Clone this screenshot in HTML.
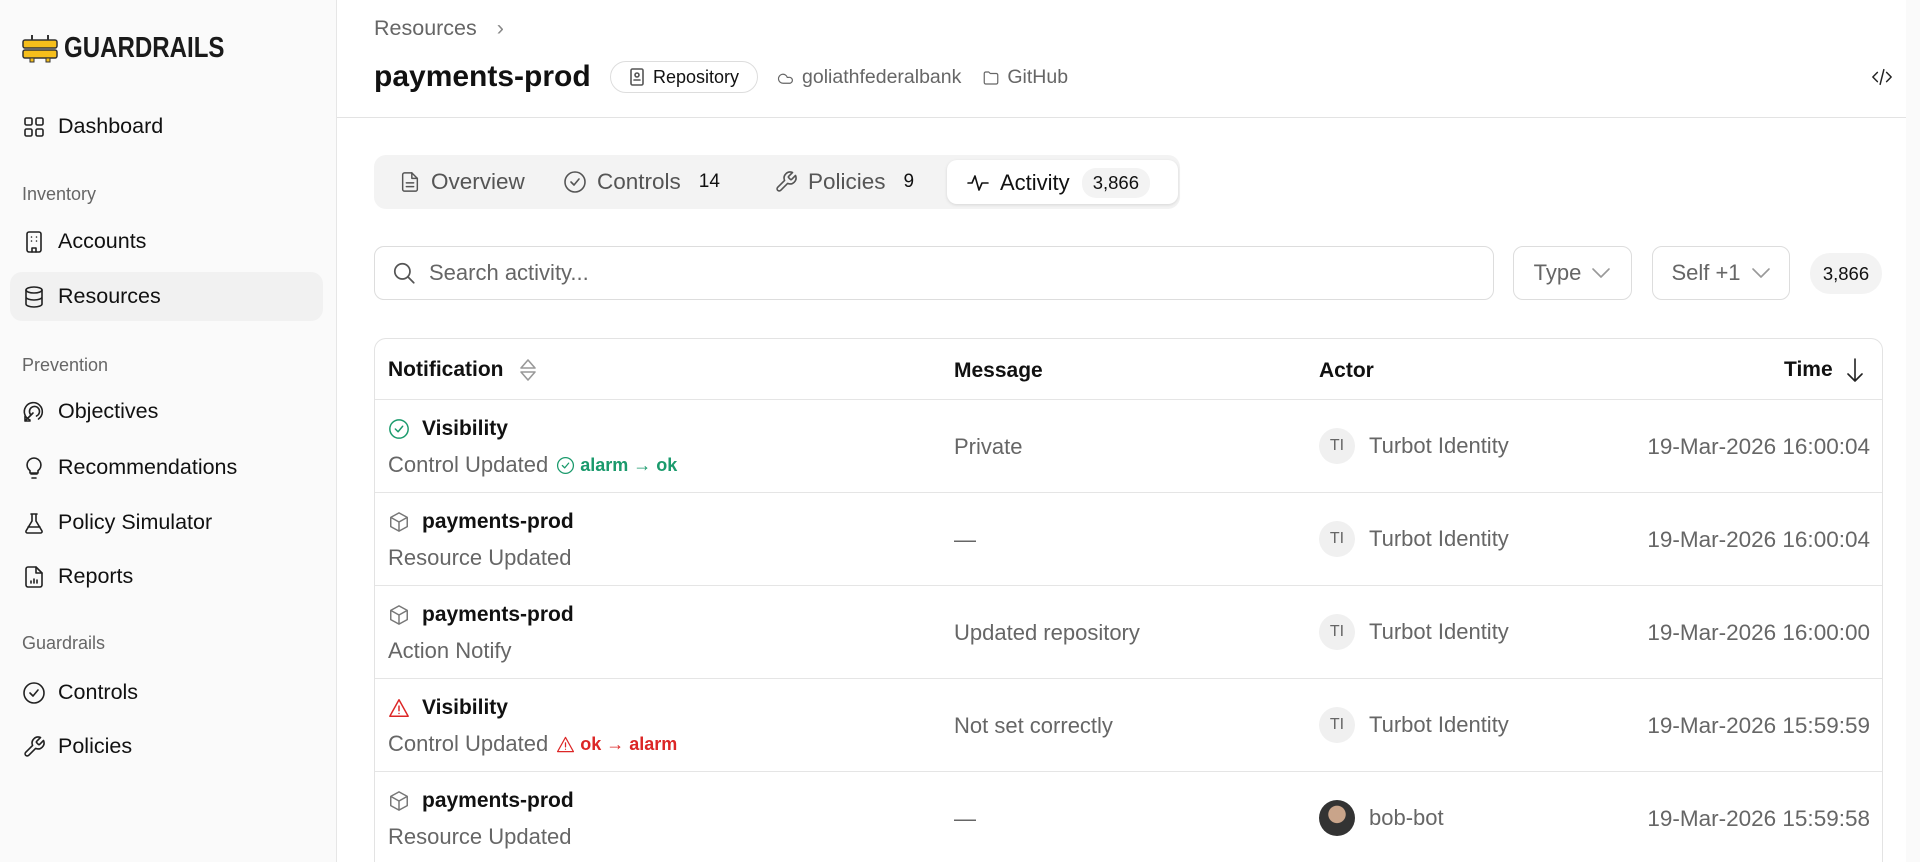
<!DOCTYPE html>
<html><head><meta charset="utf-8"><style>
*{box-sizing:border-box;margin:0;padding:0}
html,body{width:1920px;height:862px;overflow:hidden}
body{background:#fff;font-family:"Liberation Sans",sans-serif;color:#111;position:relative}
#wrap{position:absolute;left:0;top:0;width:1920px;height:862px;overflow:hidden}
.a{position:absolute;white-space:nowrap}
#sb{position:absolute;left:0;top:0;width:337px;height:862px;background:#fafafa;border-right:1px solid #e6e6e6}
.nav{position:absolute;left:22px;font-size:21.5px;color:#111;display:flex;align-items:center;gap:12px}
.nav svg{width:24px;height:24px;fill:none;stroke:#222;stroke-width:1.6;stroke-linecap:round;stroke-linejoin:round}
.sec{position:absolute;left:22px;font-size:18px;color:#666}
.ic{fill:none;stroke:currentColor;stroke-width:1.6;stroke-linecap:round;stroke-linejoin:round}
.row{position:absolute;left:375px;width:1507px;height:93px;border-top:1px solid #e5e5e5}
.t1{position:absolute;left:13px;top:17px;font-size:21px;font-weight:bold;color:#111;display:flex;align-items:center;gap:12px}
.t2{position:absolute;left:13px;top:52px;font-size:22px;color:#666;display:flex;align-items:center;gap:8px}
.msg{position:absolute;left:579px;top:34px;font-size:22px;color:#666}
.act{position:absolute;left:944px;top:28px;font-size:22px;color:#666;display:flex;align-items:center;gap:14px}
.av{width:36px;height:36px;border-radius:50%;background:#f0f0f0;font-size:16px;color:#666;display:flex;align-items:center;justify-content:center}
.tm{position:absolute;right:12px;top:34px;font-size:22.5px;color:#666}
</style></head><body><div id="wrap">
<div id="sb">
  <div class="a" style="left:22px;top:32px;display:flex;align-items:center;gap:6px">
    <svg width="36" height="30" viewBox="0 0 36 30"><rect x="9" y="1" width="2" height="6" fill="#333"/><rect x="25" y="1" width="2" height="6" fill="#333"/><rect x="1" y="6" width="34" height="8" rx="2" fill="#f5be1b" stroke="#333" stroke-width="1.5"/><rect x="1" y="16" width="34" height="8" rx="2" fill="#f5be1b" stroke="#333" stroke-width="1.5"/><rect x="8" y="24" width="4" height="4" fill="#f5be1b" stroke="#333"/><rect x="24" y="24" width="4" height="4" fill="#f5be1b" stroke="#333"/></svg>
    <span style="font-size:29px;font-weight:bold;color:#1a1a1a;display:inline-block;transform:scaleX(0.83);transform-origin:left center">GUARDRAILS</span>
  </div>
  <div class="nav" style="top:114px"><svg viewBox="0 0 24 24"><rect x="3" y="3" width="7" height="7" rx="1.5"/><rect x="14" y="3" width="7" height="7" rx="1.5"/><rect x="3" y="14" width="7" height="7" rx="1.5"/><rect x="14" y="14" width="7" height="7" rx="1.5"/></svg>Dashboard</div>
  <div class="sec" style="top:184px">Inventory</div>
  <div class="nav" style="top:229px"><svg viewBox="0 0 24 24"><rect x="5" y="2" width="14" height="20" rx="2"/><path d="M10 22v-4h4v4M9.5 7h.01M14.5 7h.01M9.5 11h.01M14.5 11h.01"/></svg>Accounts</div>
  <div class="a" style="left:10px;top:272px;width:313px;height:49px;border-radius:12px;background:#f1f1f1"></div>
  <div class="nav" style="top:284px"><svg viewBox="0 0 24 24"><ellipse cx="12" cy="5" rx="8" ry="3"/><path d="M4 5v14c0 1.7 3.6 3 8 3s8-1.3 8-3V5M4 12c0 1.7 3.6 3 8 3s8-1.3 8-3"/></svg>Resources</div>
  <div class="sec" style="top:355px">Prevention</div>
  <div class="nav" style="top:399px"><svg viewBox="0 0 24 24"><path d="M8 20a9 9 0 1 1 8.5-1M9 15a5 5 0 1 1 5.5 1M3 21l8-8M3 16v5h5"/></svg>Objectives</div>
  <div class="nav" style="top:455px"><svg viewBox="0 0 24 24"><path d="M9 18h6M10 22h4M12 2a7 7 0 0 0-4 12.7V17h8v-2.3A7 7 0 0 0 12 2z"/></svg>Recommendations</div>
  <div class="nav" style="top:510px"><svg viewBox="0 0 24 24"><path d="M9 3h6M10 3v7L4 20a1.5 1.5 0 0 0 1.3 2h13.4a1.5 1.5 0 0 0 1.3-2L14 10V3M6 16h12"/></svg>Policy Simulator</div>
  <div class="nav" style="top:564px"><svg viewBox="0 0 24 24"><path d="M14 2H6a2 2 0 0 0-2 2v16a2 2 0 0 0 2 2h12a2 2 0 0 0 2-2V8z"/><path d="M14 2v6h6M9 18v-2M12 18v-4M15 18v-3"/></svg>Reports</div>
  <div class="sec" style="top:633px">Guardrails</div>
  <div class="nav" style="top:680px"><svg viewBox="0 0 24 24"><circle cx="12" cy="12" r="10"/><path d="M8 12l3 3 5-6"/></svg>Controls</div>
  <div class="nav" style="top:734px"><svg viewBox="0 0 24 24"><path d="M14.7 6.3a1 1 0 0 0 0 1.4l1.6 1.6a1 1 0 0 0 1.4 0l3.8-3.8a6 6 0 0 1-7.9 7.9l-6.9 6.9a2.1 2.1 0 0 1-3-3l6.9-6.9a6 6 0 0 1 7.9-7.9z"/></svg>Policies</div>
</div>

<div class="a" style="left:374px;top:16px;font-size:21.5px;color:#666">Resources <span style="margin-left:14px;color:#888">›</span></div>
<div class="a" style="left:374px;top:60px;font-size:30px;font-weight:bold;color:#111">payments-prod</div>
<div class="a" style="left:610px;top:61px;width:148px;height:32px;border:1px solid #ddd;border-radius:16px;display:flex;align-items:center;justify-content:center;gap:8px;font-size:18px;color:#111"><svg width="16" height="18" viewBox="0 0 16 18" class="ic" style="color:#555"><rect x="2" y="1" width="12" height="16" rx="1.5"/><circle cx="8" cy="7" r="2"/><path d="M5 12h6"/></svg>Repository</div>
<div class="a" style="left:776px;top:66px;font-size:19.5px;color:#666;display:flex;align-items:center;gap:6px"><svg width="20" height="18" viewBox="0 0 24 24" class="ic"><path d="M17.5 19H8a6 6 0 1 1 5.7-7.8h1.8a4 4 0 0 1 2 7.8z"/></svg>goliathfederalbank<svg width="20" height="18" viewBox="0 0 24 24" class="ic" style="margin-left:14px"><path d="M3 6a2 2 0 0 1 2-2h4l2 2h8a2 2 0 0 1 2 2v10a2 2 0 0 1-2 2H5a2 2 0 0 1-2-2z"/></svg>GitHub</div>
<svg class="a ic" style="left:1870px;top:66px;color:#222" width="24" height="22" viewBox="0 0 24 24"><path d="M7 7l-5 5 5 5M17 7l5 5-5 5M14 4l-4 16"/></svg>
<div class="a" style="left:337px;top:117px;width:1583px;height:1px;background:#e3e3e3"></div>

<div class="a" style="left:374px;top:155px;width:806px;height:54px;background:#f3f3f3;border-radius:12px"></div>
<div class="a" style="left:947px;top:160px;width:231px;height:44px;background:#fff;border-radius:10px;box-shadow:0 1px 3px rgba(0,0,0,.12)"></div>
<div class="a" style="left:399px;top:169px;font-size:22.5px;color:#555;display:flex;align-items:center;gap:10px"><svg width="22" height="24" viewBox="0 0 24 24" class="ic"><path d="M14 2H6a2 2 0 0 0-2 2v16a2 2 0 0 0 2 2h12a2 2 0 0 0 2-2V8z"/><path d="M14 2v6h6M8 13h8M8 17h8"/></svg>Overview</div>
<div class="a" style="left:563px;top:169px;font-size:22.5px;color:#555;display:flex;align-items:center;gap:10px"><svg width="24" height="24" viewBox="0 0 24 24" class="ic"><circle cx="12" cy="12" r="10"/><path d="M8 12l3 3 5-6"/></svg>Controls<span style="font-size:19px;color:#111;margin-left:8px">14</span></div>
<div class="a" style="left:774px;top:169px;font-size:22.5px;color:#555;display:flex;align-items:center;gap:10px"><svg width="24" height="24" viewBox="0 0 24 24" class="ic"><path d="M14.7 6.3a1 1 0 0 0 0 1.4l1.6 1.6a1 1 0 0 0 1.4 0l3.8-3.8a6 6 0 0 1-7.9 7.9l-6.9 6.9a2.1 2.1 0 0 1-3-3l6.9-6.9a6 6 0 0 1 7.9-7.9z"/></svg>Policies<span style="font-size:19px;color:#111;margin-left:8px">9</span></div>
<div class="a" style="left:966px;top:168px;font-size:22px;color:#111;display:flex;align-items:center;gap:10px"><svg width="24" height="24" viewBox="0 0 24 24" class="ic"><path d="M2 12h4l3-7 4 14 3-7h6"/></svg>Activity<span style="font-size:18.5px;background:#f3f3f3;border-radius:14px;padding:4px 11px;margin-left:2px">3,866</span></div>

<div class="a" style="left:374px;top:246px;width:1120px;height:54px;border:1px solid #ddd;border-radius:10px;display:flex;align-items:center;padding-left:16px;gap:12px;font-size:22px;color:#666"><svg width="26" height="26" viewBox="0 0 24 24" class="ic" style="color:#555"><circle cx="10.5" cy="10.5" r="7"/><path d="M21 21l-5.5-5.5"/></svg>Search activity...</div>
<div class="a" style="left:1513px;top:246px;width:119px;height:54px;border:1px solid #ddd;border-radius:10px;display:flex;align-items:center;justify-content:center;gap:10px;font-size:22px;color:#666">Type<svg width="20" height="12" viewBox="0 0 20 12" class="ic" style="color:#999"><path d="M2 2l8 8 8-8"/></svg></div>
<div class="a" style="left:1652px;top:246px;width:138px;height:54px;border:1px solid #ddd;border-radius:10px;display:flex;align-items:center;justify-content:center;gap:10px;font-size:22px;color:#666">Self +1<svg width="20" height="12" viewBox="0 0 20 12" class="ic" style="color:#999"><path d="M2 2l8 8 8-8"/></svg></div>
<div class="a" style="left:1810px;top:253px;width:72px;height:41px;border-radius:20px;background:#f3f3f3;font-size:18.5px;color:#111;display:flex;align-items:center;justify-content:center">3,866</div>

<div class="a" style="left:374px;top:338px;width:1509px;height:524px;border:1px solid #e3e3e3;border-bottom:none;border-radius:12px 12px 0 0"></div>
<div class="a" style="left:388px;top:357px;font-size:21px;font-weight:bold;display:flex;align-items:center;gap:14px">Notification<svg width="20" height="26" viewBox="0 0 20 26" class="ic" style="color:#999"><path d="M3 11l7-8 7 8zM3 15l7 8 7-8z"/></svg></div>
<div class="a" style="left:954px;top:359px;font-size:21px;font-weight:bold">Message</div>
<div class="a" style="left:1319px;top:359px;font-size:21px;font-weight:bold">Actor</div>
<div class="a" style="left:1784px;top:357px;font-size:21px;font-weight:bold;display:flex;align-items:center;gap:12px">Time<svg width="20" height="26" viewBox="0 0 20 26" class="ic" style="color:#222"><path d="M10 2v22M3 17l7 7 7-7"/></svg></div>

<div class="row" style="top:399px">
  <div class="t1"><svg width="22" height="22" viewBox="0 0 24 24" class="ic" style="color:#1a9a6c"><circle cx="12" cy="12" r="10"/><path d="M8 12l3 3 5-6"/></svg>Visibility</div>
  <div class="t2">Control Updated <span style="color:#1a9a6c;font-size:18px;font-weight:bold;display:flex;align-items:center;gap:5px"><svg width="19" height="19" viewBox="0 0 24 24" class="ic"><circle cx="12" cy="12" r="10"/><path d="M8 12l3 3 5-6"/></svg>alarm → ok</span></div>
  <div class="msg">Private</div>
  <div class="act"><div class="av">TI</div>Turbot Identity</div>
  <div class="tm">19-Mar-2026 16:00:04</div>
</div>
<div class="row" style="top:492px">
  <div class="t1"><svg width="22" height="22" viewBox="0 0 24 24" class="ic" style="color:#777"><path d="M12 2l9 5v10l-9 5-9-5V7zM3 7l9 5 9-5M12 12v10"/></svg>payments-prod</div>
  <div class="t2">Resource Updated</div>
  <div class="msg">—</div>
  <div class="act"><div class="av">TI</div>Turbot Identity</div>
  <div class="tm">19-Mar-2026 16:00:04</div>
</div>
<div class="row" style="top:585px">
  <div class="t1"><svg width="22" height="22" viewBox="0 0 24 24" class="ic" style="color:#777"><path d="M12 2l9 5v10l-9 5-9-5V7zM3 7l9 5 9-5M12 12v10"/></svg>payments-prod</div>
  <div class="t2">Action Notify</div>
  <div class="msg">Updated repository</div>
  <div class="act"><div class="av">TI</div>Turbot Identity</div>
  <div class="tm">19-Mar-2026 16:00:00</div>
</div>
<div class="row" style="top:678px">
  <div class="t1"><svg width="22" height="22" viewBox="0 0 24 24" class="ic" style="color:#dc2626"><path d="M12 3L2 21h20zM12 10v5M12 18h.01"/></svg>Visibility</div>
  <div class="t2">Control Updated <span style="color:#dc2626;font-size:18px;font-weight:bold;display:flex;align-items:center;gap:5px"><svg width="19" height="19" viewBox="0 0 24 24" class="ic"><path d="M12 3L2 21h20zM12 10v5M12 18h.01"/></svg>ok → alarm</span></div>
  <div class="msg">Not set correctly</div>
  <div class="act"><div class="av">TI</div>Turbot Identity</div>
  <div class="tm">19-Mar-2026 15:59:59</div>
</div>
<div class="row" style="top:771px;height:91px">
  <div class="t1"><svg width="22" height="22" viewBox="0 0 24 24" class="ic" style="color:#777"><path d="M12 2l9 5v10l-9 5-9-5V7zM3 7l9 5 9-5M12 12v10"/></svg>payments-prod</div>
  <div class="t2">Resource Updated</div>
  <div class="msg">—</div>
  <div class="act"><div class="av" style="background:radial-gradient(circle at 50% 40%,#c9a48a 0 30%,#333 32%)"></div>bob-bot</div>
  <div class="tm">19-Mar-2026 15:59:58</div>
</div>
<div class="a" style="left:1906px;top:0;width:14px;height:862px;background:#fafafa"></div>
</div></body></html>
